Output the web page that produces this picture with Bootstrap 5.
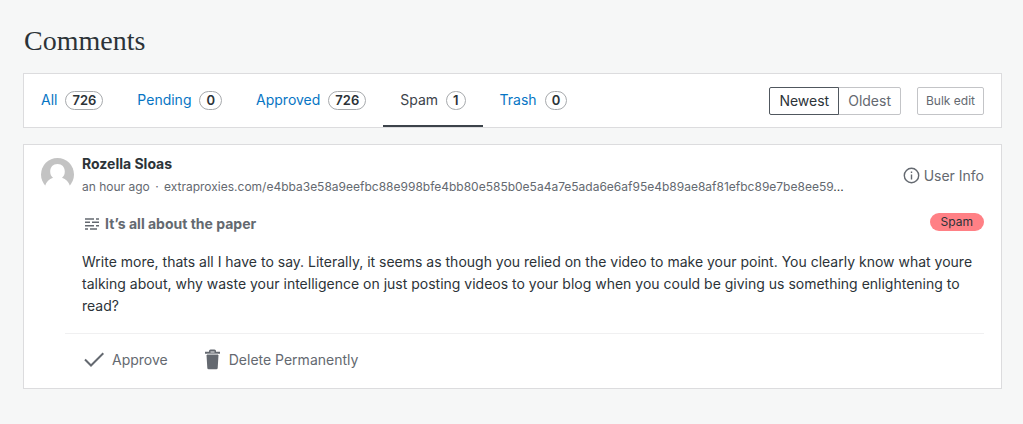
<!DOCTYPE html>
<html lang="en">
<head>
<meta charset="utf-8">
<meta name="viewport" content="width=device-width, initial-scale=1">
<title>Comments</title>
<link href="https://cdn.jsdelivr.net/npm/bootstrap@5.3.0/dist/css/bootstrap.min.css" rel="stylesheet">
<style>
  body { background: #f6f7f7; color: #2c3338; font: 14px/22px Inter, "Noto Sans", sans-serif; }
  .page { padding: 24px 21px 24px 23px; }
  h1 { font: 28px/34px "Liberation Serif", serif; color: #2c3338; margin-bottom: 15px; padding-left: 1px; }
  .panel { background: #fff; border: 1px solid #dcdcde; }
  .filters { padding: 0 17px 0 0; margin-bottom: 16px; }
  .filters .nav-link { padding: 16px 17px 15px; color: #0675c4; border-bottom: 2px solid transparent; display: flex; align-items: center; gap: 8px; height: 53px; }
  .filters .nav-link.active { color: #3c434a; border-color: #3c434a; }
  .count { border: 1px solid #a7aaad; border-radius: 12px; padding: 0 6px; font-size: 13px; line-height: 17px; font-weight: 600; color: #2c3338; }
  .btn-sort { font-size: 14px; line-height: 20px; padding: 3px 9px; border: 1px solid #c3c4c7; border-radius: 2px; color: #646970; }
  .btn-check:checked + .btn-sort { color: #2c3338; border-color: #50575e; background: #fff; }
  .btn-bulk { font-size: 12px; line-height: 20px; padding: 3px 8px; border: 1px solid #c3c4c7; border-radius: 2px; color: #646970; }
  .comment { padding: 11px 17px 17px; }
  .comment svg { flex: none; }
  .avatar { margin-top: 2px; }
  .author { font-weight: 700; line-height: 16px; }
  .meta { font-size: 12px; line-height: 16px; margin-top: 7px; color: #2c3338; }
  .meta span, .meta a { color: #646970; text-decoration: none; }
  .meta .dot { margin: 0 2px; }
  .muted-action { color: #646970; text-decoration: none; padding: 0; border: 0; background: none; }
  .post-title { color: #646970; font-weight: 700; text-decoration: none; }
  .title-row { margin: 18px 0 16px; }
  .indent { padding-left: 41px; }
  .spam-tag { background: #ff8085; color: #2c3338; font-size: 12px; line-height: 18px; border-radius: 10px; padding: 0 11px; }
  .actions { margin-left: 24px; border-top: 1px solid #f0f0f1; padding: 15px 0 0 19px; gap: 36px; }
</style>
</head>
<body>
<main class="page">
  <h1>Comments</h1>
  <div class="panel filters d-flex align-items-center justify-content-between">
    <nav class="nav flex-nowrap">
      <a class="nav-link" href="#">All <span class="count">726</span></a>
      <a class="nav-link" href="#">Pending <span class="count">0</span></a>
      <a class="nav-link" href="#">Approved <span class="count">726</span></a>
      <a class="nav-link active" href="#" aria-current="page">Spam <span class="count">1</span></a>
      <a class="nav-link" href="#">Trash <span class="count">0</span></a>
    </nav>
    <div class="d-flex gap-3">
      <div class="btn-group" role="group" aria-label="Sort order">
        <input type="radio" class="btn-check" name="sort" id="newest" checked>
        <label class="btn btn-sort" for="newest">Newest</label>
        <input type="radio" class="btn-check" name="sort" id="oldest">
        <label class="btn btn-sort" for="oldest">Oldest</label>
      </div>
      <button type="button" class="btn btn-bulk">Bulk edit</button>
    </div>
  </div>

  <article class="panel comment">
    <header class="d-flex gap-2">
      <svg class="avatar" width="33" height="33" viewBox="0 0 33 33" aria-hidden="true">
        <circle cx="16.500" cy="16.500" r="16.500" fill="#c3c3c3"/>
        <path d="M9.200 13.500C9.200 9 12 6 16.500 6S23.800 9 23.800 13.500c0 2.800-1 4.800-2.800 6.300 4 1.200 6.500 4 8 8.200L26 33H7l-3-5c1.500-4.200 4-7 8-8.200-1.800-1.500-2.800-3.500-2.800-6.300z" fill="#fff"/>
      </svg>
      <div class="flex-grow-1 text-truncate">
        <div class="author">Rozella Sloas</div>
        <div class="meta text-truncate"><span>an hour ago</span> <span class="dot">·</span> <a href="#">extraproxies.com/e4bba3e58a9eefbc88e998bfe4bb80e585b0e5a4a7e5ada6e6af95e4b89ae8af81efbc89e7be8ee59</a>...</div>
      </div>
      <button type="button" class="muted-action d-flex align-items-center gap-1">
        <svg width="17" height="17" viewBox="0 0 17 17" fill="none" stroke="#646970" stroke-width="1.400" aria-hidden="true"><circle cx="8.500" cy="8.500" r="7.200"/><path d="M8.500 7.500v5M8.500 4.500v1.600"/></svg>
        User Info
      </button>
    </header>
    <div class="indent">
      <div class="title-row d-flex justify-content-between align-items-start">
        <a href="#" class="post-title d-flex align-items-center gap-1">
          <svg width="19" height="14" viewBox="0 0 19 14" stroke="#646970" stroke-width="1.500" aria-hidden="true"><path d="M3 2h9M14 2h3M3 5.300h5M10 5.300h7M3 8.700h9M14 8.700h3M3 12h3M8 12h7"/></svg>
          It’s all about the paper
        </a>
        <span class="spam-tag">Spam</span>
      </div>
      <p class="mb-3">Write more, thats all I have to say. Literally, it seems as though you relied on the video to make your point. You clearly know what youre talking about, why waste your intelligence on just posting videos to your blog when you could be giving us something enlightening to read?</p>
    </div>
    <footer class="actions d-flex">
      <button type="button" class="muted-action d-flex align-items-center gap-2">
        <svg width="20" height="20" viewBox="0 0 20 20" fill="none" stroke="#646970" stroke-width="2" aria-hidden="true"><path d="M1 9.500l6 6L19.300 3.300"/></svg>
        Approve
      </button>
      <button type="button" class="muted-action d-flex align-items-center gap-2">
        <svg width="17" height="22" viewBox="0 0 17 22" fill="#646970" aria-hidden="true"><path d="M2.500 6h12l-.8 13q-.1 1.300-1.400 1.300H4.700q-1.300 0-1.400-1.300z"/><path d="M1 2.800h4V2.100Q5 .6 6.500.6h4Q12 .6 12 2.100v.7h4v1.900H1z"/><path d="M6.500 2.200h4v1.600h-4z" fill="#b8bbbe"/><path d="M3 4.700h11V6H3z" fill="#b8bbbe"/></svg>
        Delete Permanently
      </button>
    </footer>
  </article>
</main>
<script src="https://cdn.jsdelivr.net/npm/bootstrap@5.3.0/dist/js/bootstrap.bundle.min.js"></script>
</body>
</html>
